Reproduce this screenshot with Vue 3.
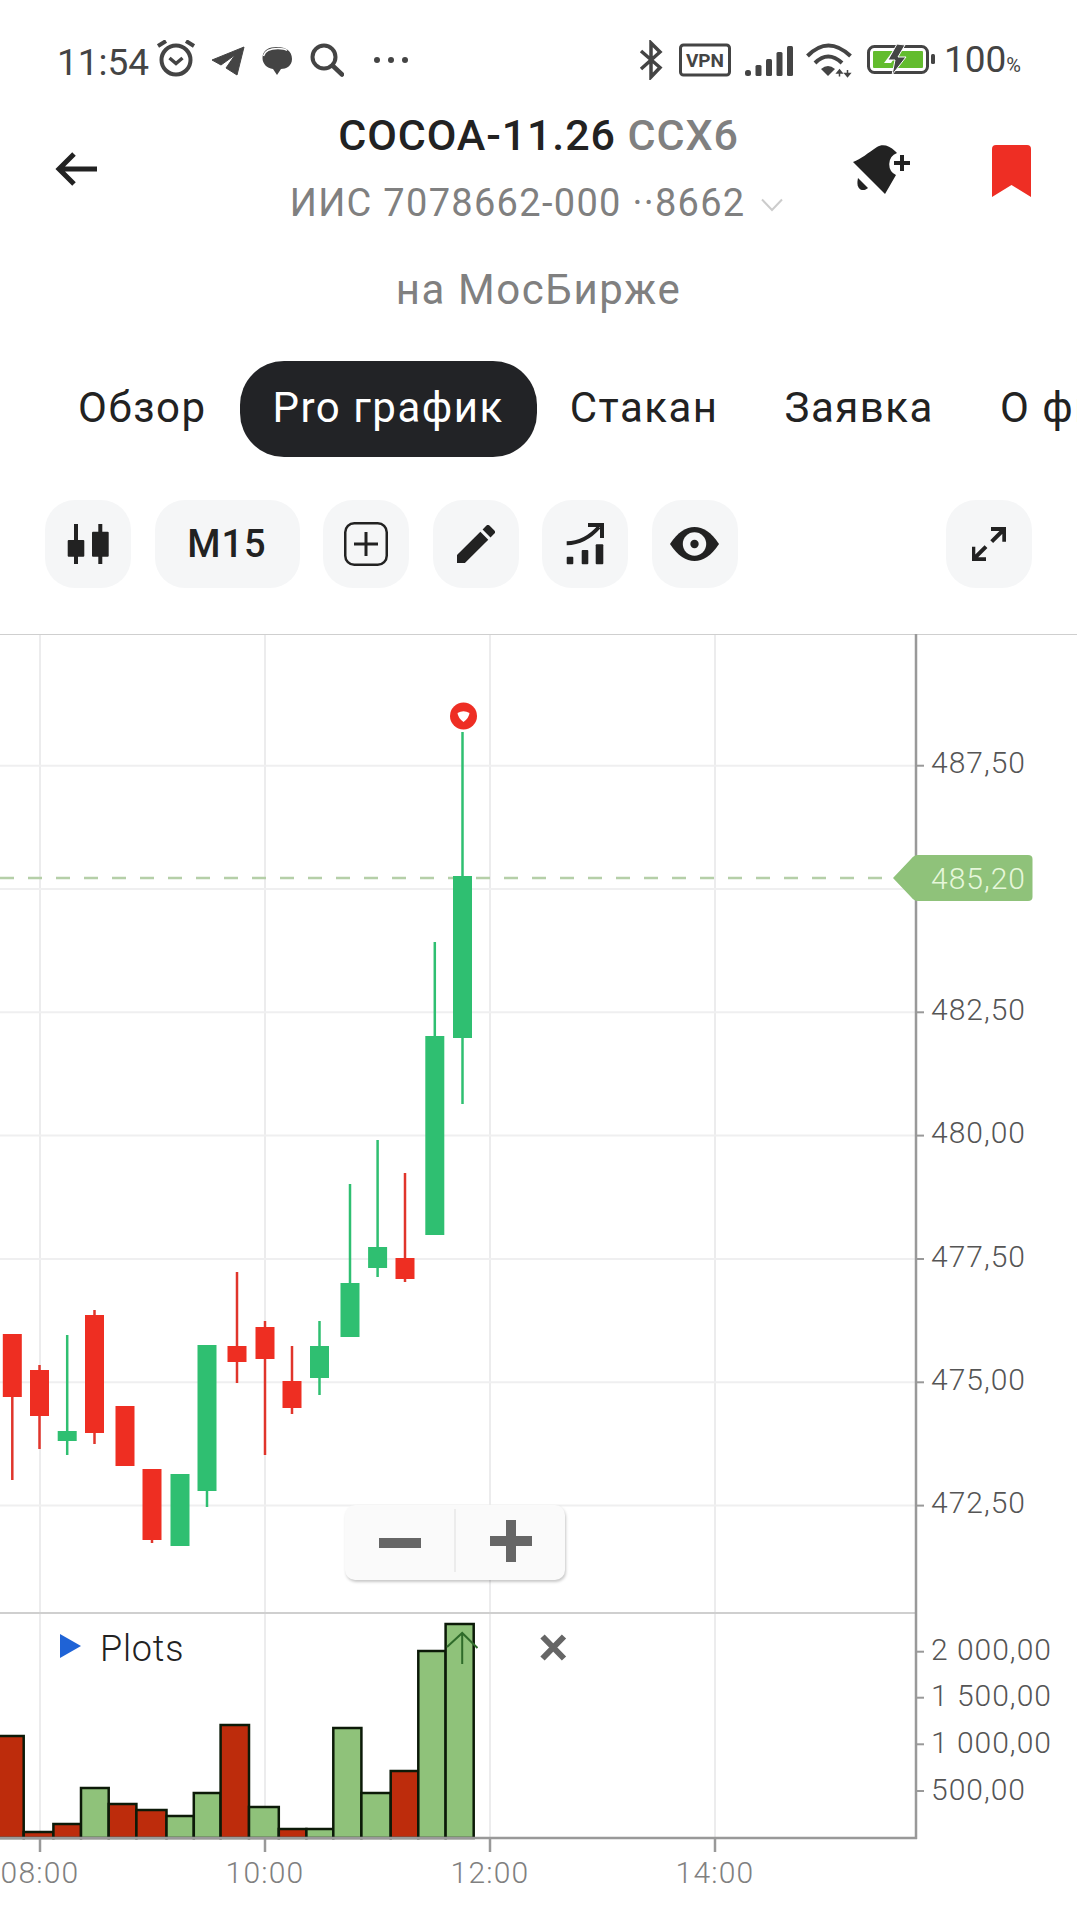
<script setup>
// chart coordinates are page pixels: the svg viewBox starts at y=634
const gridX = [40, 265, 490, 715]
const gridY = [765.7, 889, 1012.3, 1135.6, 1259, 1382.3, 1505.6]
const priceLabels = [
  { y: 765.7, text: '487,50' },
  { y: 1012.3, text: '482,50' },
  { y: 1135.6, text: '480,00' },
  { y: 1259, text: '477,50' },
  { y: 1382.3, text: '475,00' },
  { y: 1505.6, text: '472,50' }
]
const volumeLabels = [
  { y: 1651.7, text: '2 000,00' },
  { y: 1697.7, text: '1 500,00' },
  { y: 1744.3, text: '1 000,00' },
  { y: 1791, text: '500,00' }
]

// [x, up, wickTop, bodyTop, bodyBottom, wickBottom]
const candles = [
  [12.3, 0, 1334, 1334, 1397, 1480],
  [39.5, 0, 1365, 1370, 1416, 1449],
  [67.2, 1, 1335, 1431, 1441, 1455],
  [94.5, 0, 1310, 1315, 1433, 1444],
  [125, 0, 1406, 1406, 1466, 1466],
  [152, 0, 1469, 1469, 1540, 1543],
  [180, 1, 1474, 1474, 1546, 1546],
  [207, 1, 1345, 1345, 1491, 1507],
  [237, 0, 1272, 1346, 1362, 1383],
  [265, 0, 1321, 1327, 1359, 1455],
  [292, 0, 1346, 1381, 1408, 1414],
  [319.5, 1, 1321, 1346, 1378, 1395],
  [350, 1, 1184, 1283, 1337, 1337],
  [377.6, 1, 1140, 1247, 1268, 1277],
  [405, 0, 1173, 1258, 1279, 1282],
  [434.8, 1, 942, 1036, 1235, 1235],
  [462.5, 1, 732, 876, 1038, 1104]
].map(([x, up, wickTop, top, bottom, wickBottom]) => ({ x, up, wickTop, top, bottom, wickBottom }))

// [left, right, up, top of the bar]
const bars = [
  [-4.4, 23.7, 0, 1736], [23.7, 53.4, 0, 1832], [53.4, 81, 0, 1824],
  [81, 108.7, 1, 1788], [108.7, 136.4, 0, 1804], [136.4, 166.5, 0, 1810],
  [166.5, 193.8, 1, 1816], [193.8, 220.6, 1, 1793], [220.6, 249, 0, 1725],
  [249, 278.8, 1, 1807], [278.8, 306.4, 0, 1829], [306.4, 333.3, 1, 1829],
  [333.3, 361.4, 1, 1728], [361.4, 390.7, 1, 1793], [390.7, 418.3, 0, 1771],
  [418.3, 445.6, 1, 1651], [445.6, 473.7, 1, 1624]
].map(([x, right, up, top]) => ({ x, width: right - x, up, top }))
</script>

<template>
  <div class="page">
    <div class="status">
      <div class="status-left">
        <span class="clock">11:54</span>
        <svg class="ic-alarm" width="40" height="40" viewBox="0 0 40 40">
          <circle cx="20" cy="20" r="14.5" fill="none" stroke="#444" stroke-width="4" />
          <path d="M2 6 L10 1 M30 1 L38 6" stroke="#444" stroke-width="4" fill="none" />
          <path d="M13.5 18 L20 23.5 L26.500 18" stroke="#444" stroke-width="3.500" fill="none" />
        </svg>
        <svg class="ic-plane" width="34" height="40" viewBox="0 0 34 40">
          <path d="M1 20 L33 7 L26 35 L15 28 L24 15 L10 25 Z" fill="#444" stroke="#444" stroke-width="1" stroke-linejoin="round" />
        </svg>
        <svg class="ic-chat" width="30" height="40" viewBox="0 0 30 40">
          <path d="M0.500 18 C0.500 10 7 7 15 7 C24 7 30 11 30 19 C30 26 24 29 19 29 L15 35 L11 29 C5 28 0.500 24 0.500 18 Z" fill="#444" />
          <path d="M1.500 16 C3 10 9 8.500 16 8.500 C20 8.500 23 9 25 10.500" fill="none" stroke="#fff" stroke-width="1.500" />
        </svg>
        <svg class="ic-search" width="34" height="40" viewBox="0 0 34 40">
          <circle cx="14" cy="17" r="11.500" fill="none" stroke="#444" stroke-width="4" />
          <path d="M22.500 25.500 L32 34.500" stroke="#444" stroke-width="4.500" stroke-linecap="round" />
        </svg>
        <span class="dots"><i></i><i></i><i></i></span>
      </div>
      <div class="status-right">
        <svg width="25" height="40" viewBox="0 0 25 40">
          <path d="M2 11 L21 27.500 L12 37 V3 L21 12 L2 29" fill="none" stroke="#444" stroke-width="3.500" />
        </svg>
        <svg class="ic-vpn" width="52" height="40" viewBox="0 0 52 40">
          <rect x="1.500" y="5" width="49" height="30" rx="3" fill="none" stroke="#444" stroke-width="3" />
          <text x="26" y="27" text-anchor="middle" class="vpn-text">VPN</text>
        </svg>
        <svg class="ic-signal" width="48" height="40" viewBox="0 0 48 40">
          <rect x="0" y="30" width="6" height="6" rx="2.500" fill="#444" />
          <rect x="10.500" y="25" width="6" height="11" rx="1.500" fill="#444" />
          <rect x="21" y="19" width="6" height="17" rx="1.500" fill="#444" />
          <rect x="31.500" y="12" width="6" height="24" rx="1.500" fill="#444" />
          <rect x="42" y="6" width="6" height="30" rx="1.500" fill="#444" />
        </svg>
        <svg class="ic-wifi" width="46" height="40" viewBox="0 0 46 40">
          <path d="M1.500 16 Q22 -5 44.500 16 M9 23 Q22 10 36 23" fill="none" stroke="#444" stroke-width="4" />
          <path d="M15 29 Q22 23 29 29 L22 36 Z" fill="#444" />
          <path d="M33.500 31 V36.500 M33.500 30 L31 33 H36 Z M41.500 30 V36 M41.500 36.500 L39 33.500 H44 Z" stroke="#444" stroke-width="1.500" fill="#444" />
        </svg>
        <svg class="ic-battery" width="69" height="40" viewBox="0 0 69 40">
          <rect x="1.500" y="6.500" width="59" height="26" rx="6" fill="none" stroke="#444" stroke-width="3" />
          <rect x="6" y="11" width="50" height="17" rx="1" fill="#63bc2e" />
          <rect x="64" y="14" width="4" height="10" rx="1.500" fill="#444" />
          <path d="M31 13 L24 23 H17 L26 11 Z" fill="#fff" />
          <path d="M30 4 L21 20 H28 L25 35 L39 17 H31 L38 5 Z" fill="#444" stroke="#fff" stroke-width="1" />
        </svg>
        <span class="battery-text">100<small>%</small></span>
      </div>
    </div>

    <div class="head">
      <div class="head-side">
        <svg class="back" width="42" height="34" viewBox="0 0 42 34">
          <path d="M19 2 L4 17 L19 32 M4 17 H42" fill="none" stroke="#222" stroke-width="5" />
        </svg>
      </div>
      <div class="head-center">
        <div class="title">COCOA-11.26 <span>CCX6</span></div>
        <div class="account">
          ИИС 7078662-000 ··8662
          <svg width="22" height="14" viewBox="0 0 22 14">
            <path d="M1 1.500 L11 12 L21 1.500" fill="none" stroke="#ccc" stroke-width="2" />
          </svg>
        </div>
      </div>
      <div class="head-side head-actions">
        <svg width="58" height="49" viewBox="0 0 58 49">
          <path d="M0 17 C8 14 15 8 24 2 C29 -1 36 0 42 6 L44 8 A 12 12 0 0 0 43 30 L32 49 Z" fill="#222" />
          <path d="M5 33 L15 43 C11 47 2 46 5 33 Z" fill="#222" />
          <path d="M41 18 H57 M49 10 V26" stroke="#222" stroke-width="4" />
        </svg>
        <svg class="bookmark" width="39" height="52" viewBox="0 0 39 52">
          <path d="M0 52 V4 Q0 0 4 0 H35 Q39 0 39 4 V52 L19.500 40 Z" fill="#ee2e24" />
        </svg>
      </div>
    </div>

    <div class="exchange">на МосБирже</div>

    <div class="tabs">
      <div class="tab">Обзор</div>
      <div class="tab active">Pro график</div>
      <div class="tab">Стакан</div>
      <div class="tab">Заявка</div>
      <div class="tab">О фьючерсе</div>
    </div>

    <div class="tools">
      <div class="tool">
        <svg width="42" height="40" viewBox="0 0 42 40">
          <path d="M9 0 V40 M33.300 0 V40" stroke="#222" stroke-width="4" />
          <rect x="0.700" y="16" width="16.600" height="16.700" rx="1" fill="#222" />
          <rect x="25" y="7.700" width="16.700" height="25" rx="1" fill="#222" />
        </svg>
      </div>
      <div class="tool wide">M15</div>
      <div class="tool">
        <svg width="44" height="44" viewBox="0 0 44 44">
          <rect x="1.250" y="1.250" width="41.500" height="41.500" rx="9" fill="none" stroke="#222" stroke-width="2.500" />
          <path d="M10 22 H34 M22 10 V34" stroke="#222" stroke-width="3" />
        </svg>
      </div>
      <div class="tool">
        <svg width="38" height="38" viewBox="3 3 18 18">
          <path d="M3 17.250V21h3.750L17.810 9.940l-3.750-3.750L3 17.250zM20.710 7.040a1 1 0 0 0 0-1.410l-2.340-2.340a1 1 0 0 0-1.410 0l-1.830 1.830 3.750 3.750 1.830-1.830z" fill="#222" />
        </svg>
      </div>
      <div class="tool">
        <svg width="38" height="42" viewBox="0 0 38 42">
          <rect x="0.700" y="33.700" width="6.600" height="7.600" rx="1" fill="#222" />
          <rect x="15.700" y="27" width="6.600" height="14.300" rx="1" fill="#222" />
          <rect x="29.700" y="21.300" width="7.600" height="20" rx="1" fill="#222" />
          <path d="M0.700 20.300 Q19 20 33 4" fill="none" stroke="#222" stroke-width="4" />
          <path d="M22 2 H36 V15" fill="none" stroke="#222" stroke-width="4" />
        </svg>
      </div>
      <div class="tool">
        <svg width="49" height="34" viewBox="0 0 49 34">
          <path d="M0 17 C8 5 16 0 24.500 0 C33 0 41 5 49 17 C41 29 33 34 24.500 34 C16 34 8 29 0 17 Z" fill="#222" />
          <circle cx="24.500" cy="17" r="11.700" fill="#f5f6f7" />
          <circle cx="24.500" cy="17" r="4.200" fill="#222" />
        </svg>
      </div>
      <div class="tool push">
        <svg width="34" height="34" viewBox="0 0 34 34">
          <path d="M19 2 H32.300 V14.700 M32.300 2 L19.700 14.700 M1.300 19.700 V32.300 H14 M1.300 32.300 L14 19.700" fill="none" stroke="#222" stroke-width="4" />
        </svg>
      </div>
    </div>

    <div class="chart">
      <svg class="chart-svg" width="1077" height="1286" viewBox="0 634 1077 1286">
        <!-- grid -->
        <line v-for="x in gridX" :key="'gx' + x" :x1="x" :x2="x" y1="634" y2="1838" stroke="#ececed" stroke-width="2" />
        <line v-for="y in gridY" :key="'gy' + y" x1="0" x2="916" :y1="y" :y2="y" stroke="#efeff0" stroke-width="2" />
        <line x1="0" x2="1077" y1="634" y2="634" stroke="#cfcfcf" stroke-width="2" />
        <line x1="0" x2="916" y1="1613" y2="1613" stroke="#cfcfcf" stroke-width="2" />

        <!-- candles -->
        <line x1="0" x2="895" y1="878" y2="878" stroke="#b5cfa8" stroke-width="2.500" stroke-dasharray="14 14" />
        <g v-for="c in candles" :key="c.x">
          <line :x1="c.x" :x2="c.x" :y1="c.wickTop" :y2="c.wickBottom" :stroke="c.up ? '#2fbf71' : '#e0352b'" stroke-width="2.500" />
          <rect :x="c.x - 9.500" :y="c.top" width="19" :height="c.bottom - c.top" :fill="c.up ? '#2fbf71' : '#ee2e22'" />
        </g>
        <circle cx="463.500" cy="716" r="13.500" fill="#ee2e24" />
        <path d="M457.500 713 Q463.500 709.500 469.500 713 Q469 718 463.500 722 Q458 718 457.500 713 Z" fill="#fff" />

        <!-- volume -->
        <rect
          v-for="b in bars"
          :key="b.x"
          :x="b.x"
          :y="b.top"
          :width="b.width"
          :height="1838 - b.top"
          :fill="b.up ? '#8fc27a' : '#bd2c0c'"
          stroke="#0c1a08"
          stroke-width="2.500"
        />
        <path d="M462.200 1633 V1664 M447 1647 L462.200 1633 L477.500 1648" fill="none" stroke="#2f6b2a" stroke-width="2" />
        <path d="M60 1634 L81 1646 L60 1658 Z" fill="#1f63d6" />
        <text x="100" y="1661" class="plots">Plots</text>
        <path d="M542.500 1636.500 L564 1658.500 M564 1636.500 L542.500 1658.500" stroke="#666" stroke-width="6" />

        <!-- axes -->
        <line x1="916" x2="916" y1="634" y2="1839" stroke="#999" stroke-width="2.500" />
        <line x1="0" x2="917" y1="1838" y2="1838" stroke="#999" stroke-width="2.500" />
        <g v-for="l in priceLabels" :key="l.text">
          <line x1="916" x2="924" :y1="l.y" :y2="l.y" stroke="#999" stroke-width="2" />
          <text x="931" :y="l.y + 7.500" class="axis-label">{{ l.text }}</text>
        </g>
        <g v-for="l in volumeLabels" :key="l.text">
          <line x1="916" x2="924" :y1="l.y" :y2="l.y" stroke="#999" stroke-width="2" />
          <text x="931" :y="l.y + 8.500" class="axis-label">{{ l.text }}</text>
        </g>
        <g v-for="(x, i) in gridX" :key="'t' + x">
          <line :x1="x" :x2="x" y1="1838" y2="1852" stroke="#999" stroke-width="2.500" />
          <text :x="x" y="1883" text-anchor="middle" class="time-label">{{ ['08:00', '10:00', '12:00', '14:00'][i] }}</text>
        </g>

        <!-- last price tag -->
        <path d="M893 878 L911 859 Q914 855 918 855 H1028 Q1032.500 855 1032.500 859 V897 Q1032.500 901 1028 901 H918 Q914 901 911 897 Z" fill="#8fc27a" />
        <text x="931" y="889" class="price-tag">485,20</text>
      </svg>

      <div class="zoom-ctl">
        <div class="zoom-btn">
          <svg width="42" height="42" viewBox="0 0 42 42"><rect x="0" y="16" width="42" height="10" fill="#666" /></svg>
        </div>
        <div class="zoom-btn">
          <svg width="42" height="42" viewBox="0 0 42 42"><path d="M0 16 H16 V0 H26 V16 H42 V26 H26 V42 H16 V26 H0 Z" fill="#666" /></svg>
        </div>
      </div>
    </div>
  </div>
</template>

<style scoped>
.page {
  width: 1077px;
  height: 1920px;
  overflow: hidden;
  background: #fff;
  font-family: Roboto, "Liberation Sans", sans-serif;
  box-sizing: border-box;
}

/* status bar */
.status {
  display: flex;
  justify-content: space-between;
  height: 40px;
  padding: 40px 56px 0 57px;
  color: #444;
}
.status-left,
.status-right {
  display: flex;
  align-items: center;
}
.clock,
.battery-text {
  font-size: 37px;
  line-height: 40px;
  margin-top: 5px;
}
.battery-text {
  margin-left: 8px;
}
.battery-text small {
  font-size: 20px;
}
.ic-alarm { margin-left: 7px; }
.ic-plane { margin-left: 15px; }
.ic-chat { margin-left: 17px; }
.ic-search { margin-left: 18px; }
.dots {
  display: flex;
  gap: 8px;
  margin-left: 30px;
}
.dots i {
  width: 6px;
  height: 6px;
  border-radius: 50%;
  background: #444;
}
.ic-vpn { margin-left: 15px; }
.ic-signal { margin-left: 14px; }
.ic-wifi { margin-left: 13px; }
.ic-battery { margin-left: 15px; }
.vpn-text {
  font-size: 19px;
  font-weight: 700;
  fill: #444;
}

/* header */
.head {
  display: flex;
  align-items: center;
  margin-top: 30px;
  padding: 0 46px;
}
.head-side {
  flex: 1;
  display: flex;
  align-items: center;
}
.back {
  margin-left: 9px;
}
.head-actions {
  justify-content: flex-end;
  gap: 81px;
}
.bookmark {
  margin-top: 3px;
}
.head-center {
  text-align: center;
}
.title {
  font-size: 43px;
  line-height: 50px;
  font-weight: 500;
  letter-spacing: 0.9px;
  color: #222;
  white-space: nowrap;
}
.title span {
  color: #808080;
}
.account {
  margin-top: 18px;
  padding-right: 4px;
  font-size: 38px;
  line-height: 50px;
  letter-spacing: 1.3px;
  color: #808080;
  white-space: nowrap;
}
.account svg {
  margin-left: 5px;
  vertical-align: 4px;
}
.exchange {
  margin-top: 37px;
  text-align: center;
  font-size: 42px;
  line-height: 50px;
  letter-spacing: 1.6px;
  color: #808080;
}

/* tabs */
.tabs {
  display: flex;
  margin-top: 46px;
  padding-left: 45px;
  height: 96px;
  overflow: hidden;
}
.tab {
  padding: 0 33px;
  font-size: 42px;
  line-height: 94px;
  letter-spacing: 1.5px;
  color: #222;
  white-space: nowrap;
}
.tab.active {
  background: #222326;
  color: #fff;
  border-radius: 44px;
}

/* toolbar */
.tools {
  display: flex;
  gap: 23.5px;
  margin-top: 43px;
  padding: 0 45px;
}
.tool {
  display: flex;
  align-items: center;
  justify-content: center;
  width: 86px;
  height: 88px;
  border-radius: 30px;
  background: #f5f6f7;
  font-size: 38px;
  font-weight: 500;
  letter-spacing: 1px;
  color: #222;
}
.tool.wide {
  width: 145px;
}
.tool.push {
  margin-left: auto;
}

/* chart */
.chart {
  position: relative;
  margin-top: 46px;
}
.chart-svg {
  display: block;
}
.plots {
  font-size: 36px;
  font-weight: 300;
  letter-spacing: 0.8px;
  fill: #222;
}
.axis-label {
  font-size: 30px;
  font-weight: 300;
  letter-spacing: 1px;
  fill: #555;
}
.time-label {
  font-size: 30px;
  font-weight: 300;
  letter-spacing: 1.2px;
  fill: #808080;
}
.price-tag {
  font-size: 30px;
  font-weight: 300;
  letter-spacing: 1px;
  fill: #e6f7da;
}
.zoom-ctl {
  position: absolute;
  left: 345px;
  top: 871px;
  display: flex;
  width: 220px;
  height: 75px;
  background: #fafafa;
  border-radius: 10px;
  box-shadow: 1px 2px 3px rgba(0, 0, 0, 0.22);
}
.zoom-btn {
  flex: 1;
  display: flex;
  align-items: center;
  justify-content: center;
}
.zoom-btn + .zoom-btn {
  border-left: 2px solid #ececec;
  margin: 4px 0 8px;
}
</style>

<style>
html, body {
  margin: 0;
  background: #fff;
}
</style>
